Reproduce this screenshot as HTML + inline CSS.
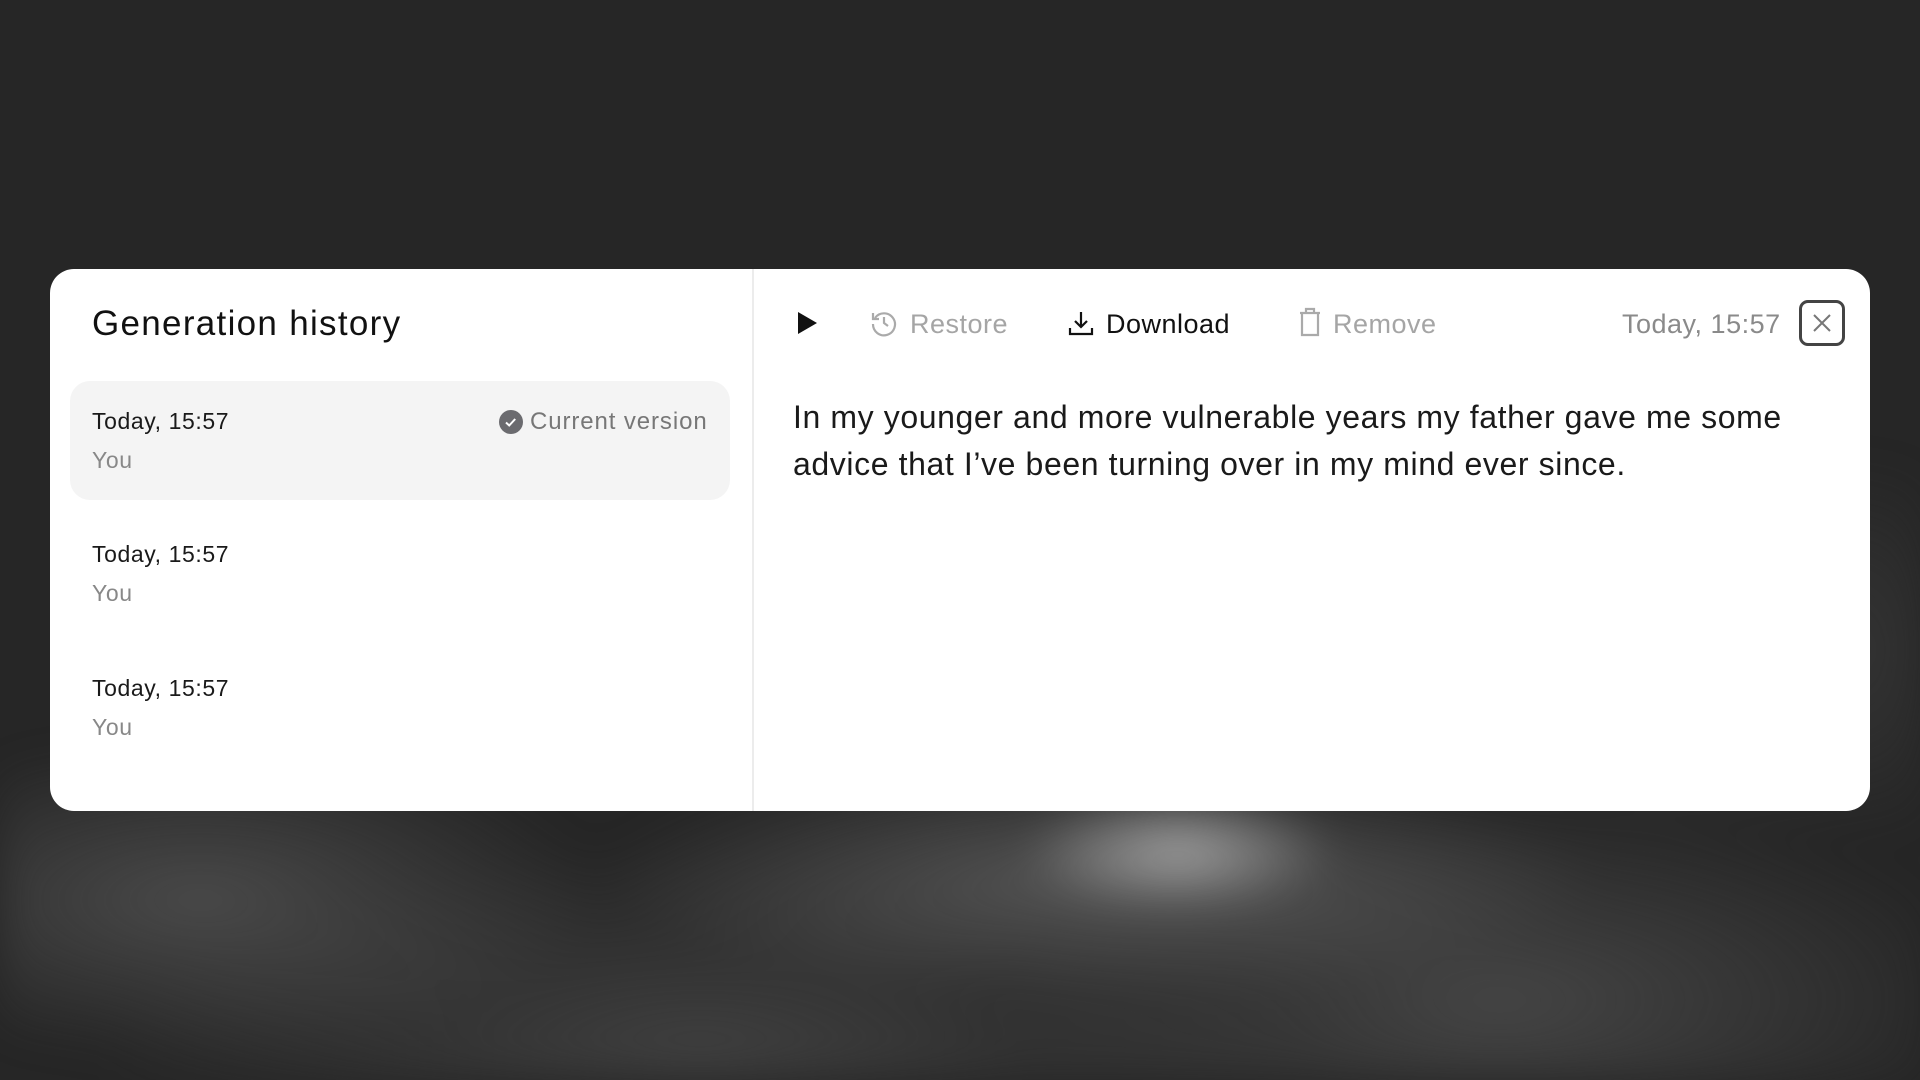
<!DOCTYPE html>
<html><head><meta charset="utf-8"><style>
*{margin:0;padding:0;box-sizing:border-box}
body{width:1920px;height:1080px;overflow:hidden;background:#262626;font-family:"Liberation Sans",sans-serif;position:relative}
.bg{position:absolute;inset:0;background:
radial-gradient(ellipse 160px 60px at 1180px 850px,rgba(200,200,200,.7),transparent),
radial-gradient(ellipse 500px 120px at 1100px 880px,rgba(120,120,120,.6),transparent),
radial-gradient(ellipse 400px 160px at 200px 900px,rgba(110,110,110,.5),transparent),
radial-gradient(ellipse 500px 200px at 1500px 1000px,rgba(90,90,90,.6),transparent),
radial-gradient(ellipse 600px 200px at 700px 1050px,rgba(80,80,80,.6),transparent),
radial-gradient(ellipse 400px 200px at 1750px 650px,rgba(70,70,70,.5),transparent);filter:blur(20px)}
.card{position:absolute;left:50px;top:269px;width:1820px;height:542px;background:#fff;border-radius:24px;overflow:hidden}
.div{position:absolute;left:702px;top:0;width:2px;height:100%;background:#ececec}
.t{position:absolute;white-space:nowrap}
.title{left:42px;top:35px;font-size:35px;letter-spacing:1.3px;color:#111}
.sel{position:absolute;left:20px;top:112px;width:660px;height:119px;background:#f4f4f4;border-radius:20px}
.d{font-size:23px;letter-spacing:0.6px;color:#1a1a1a}
.y{font-size:23px;letter-spacing:0.6px;color:#888}
.tb{font-size:27px;top:40px;letter-spacing:0.5px}
.body{left:743px;top:125px;font-size:32px;letter-spacing:0.6px;line-height:47px;color:#1a1a1a;white-space:normal;width:1015px}
</style></head><body>
<div class="bg"></div>
<div class="card">
<div class="div"></div>
<div class="t title">Generation history</div>
<div class="sel"></div>
<div class="t d" style="left:42px;top:139px">Today, 15:57</div>
<div class="t y" style="left:42px;top:178px">You</div>
<svg class="t" style="left:448px;top:140px" width="26" height="26" viewBox="0 0 26 26"><circle cx="13" cy="13" r="12" fill="#6b6b6f"/><path d="M8 13.5l3.2 3 6-6.5" stroke="#fff" stroke-width="2" fill="none"/></svg>
<div class="t y" style="left:480px;top:139px;color:#777;font-size:24px;letter-spacing:0.9px">Current version</div>
<div class="t d" style="left:42px;top:272px">Today, 15:57</div>
<div class="t y" style="left:42px;top:311px">You</div>
<div class="t d" style="left:42px;top:406px">Today, 15:57</div>
<div class="t y" style="left:42px;top:445px">You</div>

<svg class="t" style="left:746px;top:42px" width="22" height="24" viewBox="0 0 22 24"><path d="M2 1L21 12L2 23Z" fill="#111"/></svg>
<svg class="t" style="left:820px;top:40px" width="28" height="28" viewBox="0 0 28 28" fill="none" stroke="#aaa" stroke-width="2.2"><path d="M5 9A11 11 0 1 1 3 15"/><path d="M3 4v6h6"/><path d="M14 8v6l4 3"/></svg>
<div class="t tb" style="left:860px;color:#a5a5a5">Restore</div>
<svg class="t" style="left:1017px;top:40px" width="28" height="28" viewBox="0 0 28 28" fill="none" stroke="#111" stroke-width="2.2"><path d="M14 3v15M8 12l6 6 6-6M3 19v6h22v-6"/></svg>
<div class="t tb" style="left:1056px;color:#111">Download</div>
<svg class="t" style="left:1247px;top:38px" width="26" height="30" viewBox="0 0 26 30" fill="none" stroke="#aaa" stroke-width="2.2"><path d="M3 6h20M9 6V2h8v4M5 6v22h16V6"/></svg>
<div class="t tb" style="left:1283px;color:#a5a5a5">Remove</div>
<div class="t tb" style="left:1572px;color:#8a8a8a">Today, 15:57</div>
<div class="t" style="left:1749px;top:31px;width:46px;height:46px;border:3px solid #444;border-radius:9px"></div>
<svg class="t" style="left:1759px;top:41px" width="26" height="26" viewBox="0 0 26 26" stroke="#777" stroke-width="2"><path d="M5 5L21 21M21 5L5 21"/></svg>

<div class="t body">In my younger and more vulnerable years my father gave me some advice that I’ve been turning over in my mind ever since.</div>
</div>
</body></html>
